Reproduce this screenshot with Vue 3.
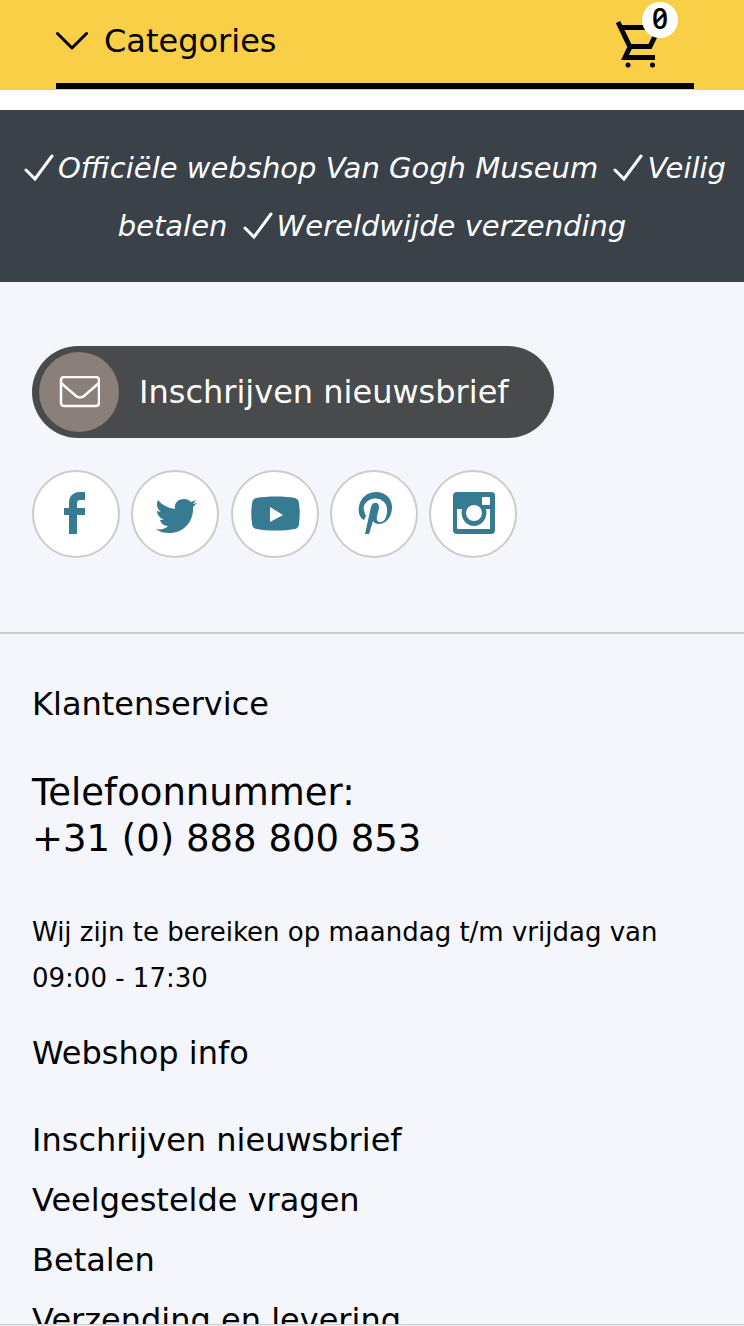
<script setup>
const infoLinks = ['Inschrijven nieuwsbrief', 'Veelgestelde vragen', 'Betalen', 'Verzending en levering']
const benefits = ['Officiële webshop Van Gogh Museum', 'Veilig betalen', 'Wereldwijde verzending']
const socials = [
  { name: 'Facebook', path: 'M36 63V44h-5v-7h5v-5c0-7 4-11 11-11h5v8h-4c-3 0-4 1-4 4v4h8v7h-8v19z' },
  { name: 'Twitter', path: 'M24 58c5 1 9 0 12-3-4 0-7-3-8-6h4c-4-2-7-5-7-9l4 1c-4-3-5-8-3-12 4 5 10 8 17 9-1-6 3-10 9-10 3 0 5 1 7 3l5-2-3 4 4-1-4 4c1 14-9 26-24 26-5 0-9-1-13-4z' },
  { name: 'YouTube', path: 'M24 27c11-2 29-2 39 0 3 1 4 3 4 6 1 6 1 13 0 19 0 4-2 6-5 6-10 2-27 2-37 0-3 0-5-2-5-6-1-6-1-13 0-19 0-3 1-5 4-6zM38 36v15l13-7z' },
  { name: 'Pinterest', path: 'M34 63l6-27c1-5 8-6 8 0 0 4-3 9-2 13 1 3 6 3 8-1 3-6 3-13-1-17-6-6-17-4-20 4-1 4 1 7 2 10l-2 4c-5-2-6-9-5-14 2-9 9-14 17-14 10 0 16 7 16 15 0 10-6 17-13 17-3 0-5-1-6-3l-4 13z' },
  { name: 'Instagram', path: 'M27 21h34q4 0 4 3v35q0 4-4 4H27q-4 0-4-4V25q0-4 4-4zM53 26q-1 0-1 1v6q0 1 1 1h6q1 0 1-1v-6q0-1-1-1zM27 38v19q0 1 1 1h32V38h-4c2 8-3 17-12 17s-14-9-12-17zM44 34a8 8 0 1 0 0 16 8 8 0 0 0 0-16z' },
]
</script>

<template>
  <div class="page">
    <header class="header">
      <div class="bar">
        <button class="categories" type="button">
          <svg width="32" height="20" viewBox="0 0 32 20" aria-hidden="true"><path d="M1.500 2.500 16 17 30.500 2.500" /></svg>
          <span>Categories</span>
        </button>
        <a class="cart" href="#" aria-label="Winkelwagen">
          <svg width="48" height="52" viewBox="0 0 48 52" aria-hidden="true">
            <path d="M2 6l12 25M5 11.500H46M13 30.500H34L45 8M14 31L9 41.500H39" fill="none" stroke="#000" stroke-width="5" />
            <circle cx="12" cy="49" r="2.500" /><circle cx="36.500" cy="49" r="2.500" />
          </svg>
          <span class="count">0</span>
        </a>
      </div>
    </header>

    <p class="benefits">
      <template v-for="item in benefits" :key="item"><svg class="check" width="30" height="28" viewBox="0 0 30 28" aria-hidden="true"><path d="M2 17l9 9L28 3" /></svg><em>{{ item }}</em>{{ ' ' }}</template>
    </p>

    <main class="content">
      <section class="contact">
        <a class="newsletter" href="#">
          <span class="mail">
            <svg width="42" height="32" viewBox="-2 0 42 32" aria-hidden="true"><rect x="1" y="1" width="38" height="29" rx="3" /><path d="M1 7l15 13q4 3 8 0L39 7" /></svg>
          </span>
          <span>Inschrijven nieuwsbrief</span>
        </a>
        <nav class="socials" aria-label="Social media">
          <a v-for="s in socials" :key="s.name" href="#" :aria-label="s.name">
            <svg width="84" height="84" viewBox="1 1 84 84" aria-hidden="true"><path :d="s.path" fill-rule="evenodd" /></svg>
          </a>
        </nav>
      </section>

      <section class="service">
        <h2>Klantenservice</h2>
        <p class="phone">Telefoonnummer:<br><a href="tel:+31888800853">+31 (0) 888 800 853</a></p>
        <p class="hours">Wij zijn te bereiken op maandag t/m vrijdag van 09:00 - 17:30</p>
        <h2>Webshop info</h2>
        <ul>
          <li v-for="link in infoLinks" :key="link"><a href="#">{{ link }}</a></li>
        </ul>
      </section>
    </main>
    <div class="bottom"></div>
  </div>
</template>

<style>
body { margin: 0; }
</style>

<style scoped>
* { box-sizing: border-box; }
.page {
  display: flex;
  flex-direction: column;
  height: 100vh;
  overflow: hidden;
  background: #f4f6fc;
  color: #000;
  font-family: Verdana, "DejaVu Sans", sans-serif;
  font-size: 32px;
}
a { color: inherit; text-decoration: none; }
h2, p, ul { margin: 0; padding: 0; font-weight: 400; }
.header {
  flex: none;
  padding: 0 50px 1px 56px;
  background: #f8cf46;
}
.bar {
  display: flex;
  align-items: center;
  justify-content: space-between;
  height: 89px;
  border-bottom: 6px solid #000;
}
.categories {
  display: flex;
  align-items: center;
  gap: 16px;
  padding: 0 0 2px;
  border: 0;
  background: none;
  color: inherit;
  font: inherit;
}
.categories svg { fill: none; stroke: #000; stroke-width: 3; stroke-linecap: round; stroke-linejoin: round; }
.cart { position: relative; margin-right: 30px; }
.cart svg { display: block; }
.count {
  position: absolute;
  top: -14px;
  right: -14px;
  width: 36px;
  height: 36px;
  border-radius: 50%;
  background: #fff;
  font: 600 28px/33px "Open Sans", sans-serif;
  font-feature-settings: "zero";
  text-align: center;
}
.benefits {
  flex: none;
  border-top: 20px solid #fff;
  padding: 29px 8px 27px;
  background: #3a4149;
  color: #fff;
  font-size: 29px;
  line-height: 58px;
  text-align: center;
}
.check { margin: 0 4px 0 6px; vertical-align: -3px; fill: none; stroke: #fff; stroke-width: 3; stroke-linecap: round; }
.content { flex: 1; min-height: 0; overflow: hidden; }
.contact { padding: 64px 32px 74px; border-bottom: 2px solid #ccc; }
.newsletter {
  display: inline-flex;
  align-items: center;
  gap: 20px;
  padding: 6px 45px 6px 7px;
  border-radius: 46px;
  background: #494a4b;
  color: #fff;
}
.mail {
  display: grid;
  place-items: center;
  width: 80px;
  height: 80px;
  border-radius: 50%;
  background: #8a8079;
}
.mail svg { fill: none; stroke: #fff; stroke-width: 2.5; }
.socials { display: flex; justify-content: space-between; max-width: 485px; margin-top: 32px; }
.socials a {
  display: grid;
  place-items: center;
  width: 88px;
  height: 88px;
  border: 2px solid #ccc;
  border-radius: 50%;
  background: #fff;
}
.socials svg { fill: #367b91; }
.service { padding: 46px 32px 0; }
h2 { font-size: 32px; line-height: 48px; }
.phone { margin: 42px 0 47px; font-size: 37px; line-height: 46px; }
.hours { margin-bottom: 28px; font-size: 26px; line-height: 46px; }
ul { margin-top: 33px; list-style: none; line-height: 60px; }
.bottom { flex: none; height: 2px; border-top: 1px solid #ccc; background: #eee; }
</style>
